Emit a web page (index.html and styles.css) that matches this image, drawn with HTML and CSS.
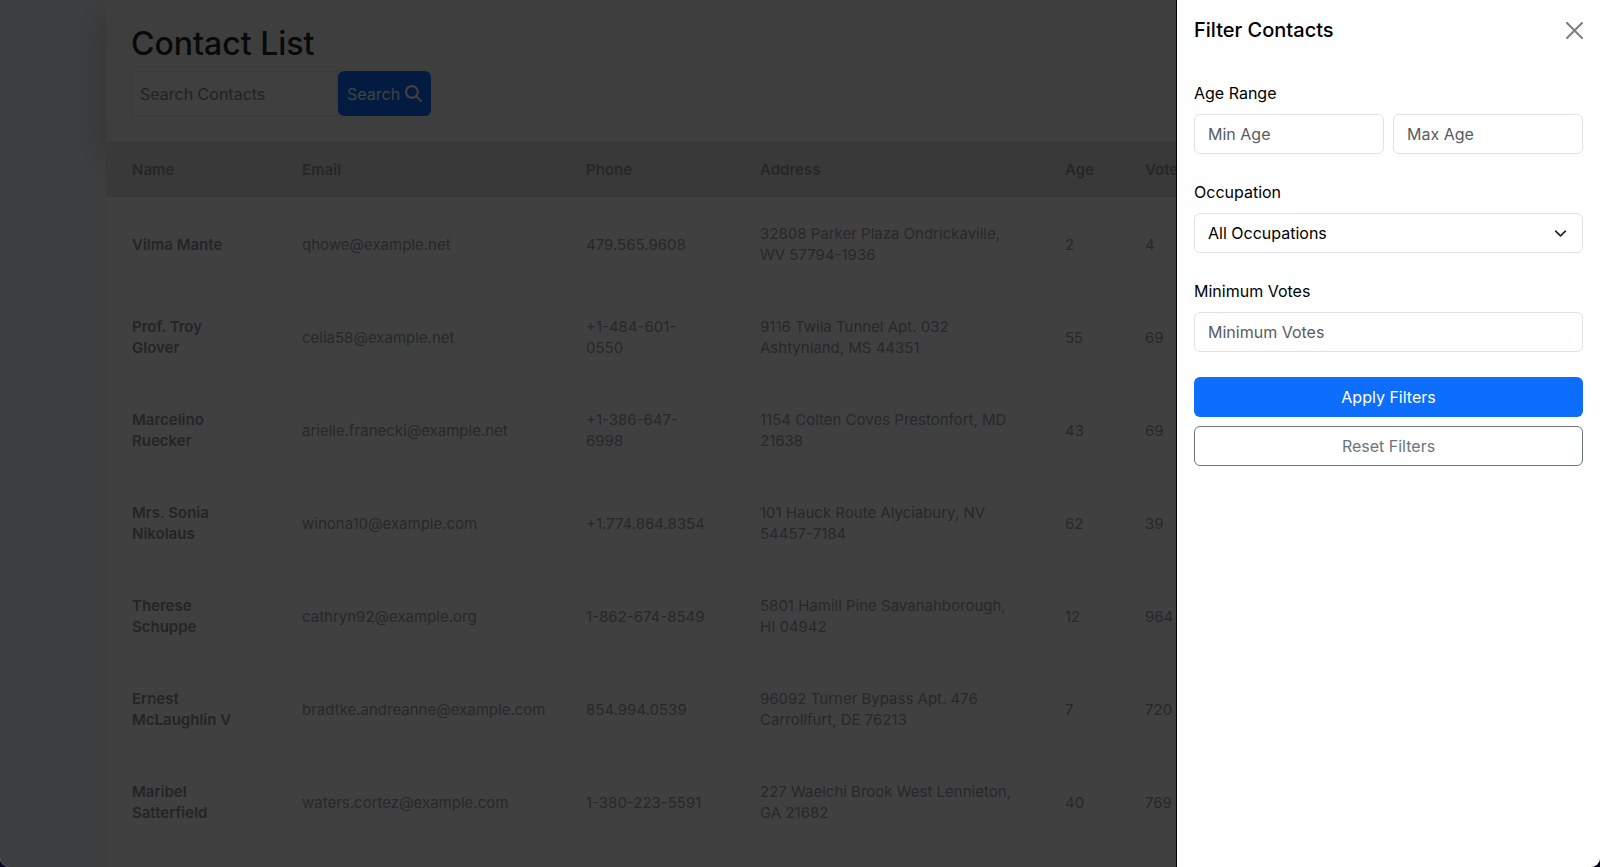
FILE: index.html
```
<!DOCTYPE html>
<html lang="en">
<head>
    <meta charset="UTF-8">
    <meta name="viewport" content="width=device-width, initial-scale=1.0">
    <title>Contact List</title>
    <link rel="stylesheet" href="styles.css">
</head>
<body>
    <div class="window">
        <main class="container">
            <div class="list-header">
                <h1>Contact List</h1>
                <form class="search-form">
                    <input type="text" class="search-input" placeholder="Search Contacts" aria-label="Search Contacts">
                    <button type="submit" class="btn-search">Search
                        <svg class="icon-search" viewBox="0 0 512 512" aria-hidden="true"><path fill="currentColor" d="M416 208c0 45.900-14.900 88.300-40 122.700L502.600 457.400c12.500 12.500 12.500 32.800 0 45.300s-32.800 12.500-45.300 0L330.700 376c-34.400 25.200-76.800 40-122.700 40C93.100 416 0 322.900 0 208S93.100 0 208 0S416 93.100 416 208zM208 352a144 144 0 1 0 0-288 144 144 0 1 0 0 288z"/></svg>
                    </button>
                </form>
            </div>
            <table class="contacts">
                <thead>
                    <tr>
                        <th class="col-name">Name</th>
                        <th class="col-email">Email</th>
                        <th class="col-phone">Phone</th>
                        <th class="col-address">Address</th>
                        <th class="col-age">Age</th>
                        <th>Votes</th>
                    </tr>
                </thead>
                <tbody>
                    <tr>
                        <td class="name">Vilma Mante</td>
                        <td>qhowe@example.net</td>
                        <td>479.565.9608</td>
                        <td>32808 Parker Plaza Ondrickaville, WV 57794-1936</td>
                        <td>2</td>
                        <td>4</td>
                    </tr>
                    <tr>
                        <td class="name">Prof. Troy Glover</td>
                        <td>celia58@example.net</td>
                        <td>+1-484-601-0550</td>
                        <td>9116 Twila Tunnel Apt. 032 Ashtynland, MS 44351</td>
                        <td>55</td>
                        <td>69</td>
                    </tr>
                    <tr>
                        <td class="name">Marcelino Ruecker</td>
                        <td>arielle.franecki@example.net</td>
                        <td>+1-386-647-6998</td>
                        <td>1154 Colten Coves Prestonfort, MD 21638</td>
                        <td>43</td>
                        <td>69</td>
                    </tr>
                    <tr>
                        <td class="name">Mrs. Sonia Nikolaus</td>
                        <td>winona10@example.com</td>
                        <td>+1.774.864.8354</td>
                        <td>101 Hauck Route Alyciabury, NV 54457-7184</td>
                        <td>62</td>
                        <td>39</td>
                    </tr>
                    <tr>
                        <td class="name">Therese Schuppe</td>
                        <td>cathryn92@example.org</td>
                        <td>1-862-674-8549</td>
                        <td>5801 Hamill Pine Savanahborough, HI 04942</td>
                        <td>12</td>
                        <td>964</td>
                    </tr>
                    <tr>
                        <td class="name">Ernest McLaughlin V</td>
                        <td>bradtke.andreanne@example.com</td>
                        <td>854.994.0539</td>
                        <td>96092 Turner Bypass Apt. 476 Carrollfurt, DE 76213</td>
                        <td>7</td>
                        <td>720</td>
                    </tr>
                    <tr>
                        <td class="name">Maribel Satterfield</td>
                        <td>waters.cortez@example.com</td>
                        <td>1-380-223-5591</td>
                        <td>227 Waelchi Brook West Lennieton, GA 21682</td>
                        <td>40</td>
                        <td>769</td>
                    </tr>
                </tbody>
            </table>
        </main>

        <div class="backdrop"></div>

        <!-- Filter panel -->
        <aside class="offcanvas" aria-labelledby="filterTitle">
            <div class="offcanvas-header">
                <h2 id="filterTitle">Filter Contacts</h2>
                <button type="button" class="btn-close" aria-label="Close">
                    <svg viewBox="0 0 16 16" aria-hidden="true"><path fill="currentColor" d="M.293.293a1 1 0 0 1 1.414 0L8 6.586 14.293.293a1 1 0 1 1 1.414 1.414L9.414 8l6.293 6.293a1 1 0 0 1-1.414 1.414L8 9.414l-6.293 6.293a1 1 0 0 1-1.414-1.414L6.586 8 .293 1.707a1 1 0 0 1 0-1.414z"/></svg>
                </button>
            </div>
            <form class="filter-form">
                <div class="form-group">
                    <label for="minAge">Age Range</label>
                    <div class="age-range">
                        <input type="text" inputmode="numeric" id="minAge" class="form-control" placeholder="Min Age">
                        <input type="text" inputmode="numeric" id="maxAge" class="form-control" placeholder="Max Age" aria-label="Max Age">
                    </div>
                </div>
                <div class="form-group">
                    <label for="occupation">Occupation</label>
                    <select id="occupation" class="form-control form-select">
                        <option>All Occupations</option>
                    </select>
                </div>
                <div class="form-group">
                    <label for="minVotes">Minimum Votes</label>
                    <input type="text" inputmode="numeric" id="minVotes" class="form-control" placeholder="Minimum Votes">
                </div>
                <div class="form-actions">
                    <button type="submit" class="btn btn-primary">Apply Filters</button>
                    <button type="reset" class="btn btn-outline">Reset Filters</button>
                </div>
            </form>
        </aside>
    </div>
</body>
</html>
```
FILE: styles.css
```
* {
    box-sizing: border-box;
}
body {
    margin: 0;
    background-color: #08061c;
    font-family: Inter, "Liberation Sans", sans-serif;
    font-size: 16px;
    line-height: 26px;
    color: #000;
}
input, select, button {
    font: inherit;
}
.window {
    position: relative;
    height: 100vh;
    overflow: hidden;
    background-color: #f1f7ff;
    border-radius: 0 0 9px 9px;
}
.container {
    margin: 0 106px;
    min-height: 100%;
    background-color: #fff;
}
.list-header {
    position: relative;
    padding: 22px 25px 25px;
    background-color: #f5f8fb;
    box-shadow: 0 16px 36px rgba(0, 0, 0, 0.2);
}
.list-header h1 {
    margin: 0 0 6px;
    font-size: 32px;
    font-weight: 500;
    line-height: 43px;
    color: #212529;
}
.search-form {
    display: flex;
}
.search-input {
    width: 207px;
    height: 45px;
    padding: 0 8px;
    border: 1px solid #dee2e6;
    background-color: #fbfbfb;
}
.search-input::placeholder {
    color: #8a8a8a;
    opacity: 1;
}
.btn-search {
    display: flex;
    align-items: center;
    gap: 5px;
    height: 45px;
    padding: 0 9px;
    border: none;
    border-radius: 6px;
    background-color: #0d6efd;
    color: #fff;
}
.icon-search {
    width: 17px;
    height: 17px;
}

/* Contacts table */
.contacts {
    position: relative;
    width: 100%;
    table-layout: fixed;
    border-collapse: collapse;
    background-color: #fff;
    font-size: 15px;
    line-height: 21px;
}
.contacts th {
    height: 56px;
    padding: 0 26px;
    background-color: #e2e2e2;
    color: #999;
    font-weight: 600;
    text-align: left;
}
.contacts td {
    height: 93px;
    padding: 1px 26px 0;
    color: #999fa3;
}
.contacts .name {
    color: #8c9296;
    font-weight: 600;
}
.col-name {
    width: 170px;
}
.col-email {
    width: 284px;
}
.col-phone {
    width: 174px;
}
.col-address {
    width: 305px;
}
.col-age {
    width: 80px;
}

.backdrop {
    position: absolute;
    inset: 0;
    background-color: rgba(0, 0, 0, 0.75);
}

/* Filter panel */
.offcanvas {
    position: absolute;
    top: 0;
    right: 0;
    bottom: 0;
    width: 424px;
    padding: 17px;
    border-left: 1px solid #000;
    background-color: #fff;
}
.offcanvas-header {
    display: flex;
    align-items: center;
    justify-content: space-between;
    margin-bottom: 37px;
}
.offcanvas-header h2 {
    margin: 0;
    font-size: 20px;
    font-weight: 500;
    line-height: 26px;
}
.btn-close {
    display: flex;
    padding: 0;
    border: none;
    background: none;
    color: #7f7f7f;
}
.btn-close svg {
    width: 17px;
    height: 17px;
}
.form-group {
    display: flex;
    flex-direction: column;
    gap: 8px;
    margin-bottom: 25px;
}
.age-range {
    display: flex;
    gap: 9px;
}
.form-control {
    width: 100%;
    height: 40px;
    padding: 0 13px;
    border: 1px solid #dee2e6;
    border-radius: 6px;
    background-color: #fff;
    color: #000;
}
.form-control::placeholder {
    color: #595c5f;
    opacity: 1;
}
.form-select {
    appearance: none;
    background-image: url("data:image/svg+xml,%3csvg xmlns='http://www.w3.org/2000/svg' viewBox='0 0 16 16'%3e%3cpath fill='none' stroke='%23212529' stroke-linecap='round' stroke-linejoin='round' stroke-width='2' d='m2 5 6 6 6-6'/%3e%3c/svg%3e");
    background-repeat: no-repeat;
    background-position: right 15px center;
    background-size: 13px 13px;
}
.form-actions {
    display: flex;
    flex-direction: column;
    gap: 9px;
}
.btn {
    height: 40px;
    border: 1px solid transparent;
    border-radius: 6px;
}
.btn-primary {
    background-color: #0d6efd;
    color: #fff;
}
.btn-outline {
    border-color: #6c757d;
    background-color: #fff;
    color: #6c757d;
}
```
